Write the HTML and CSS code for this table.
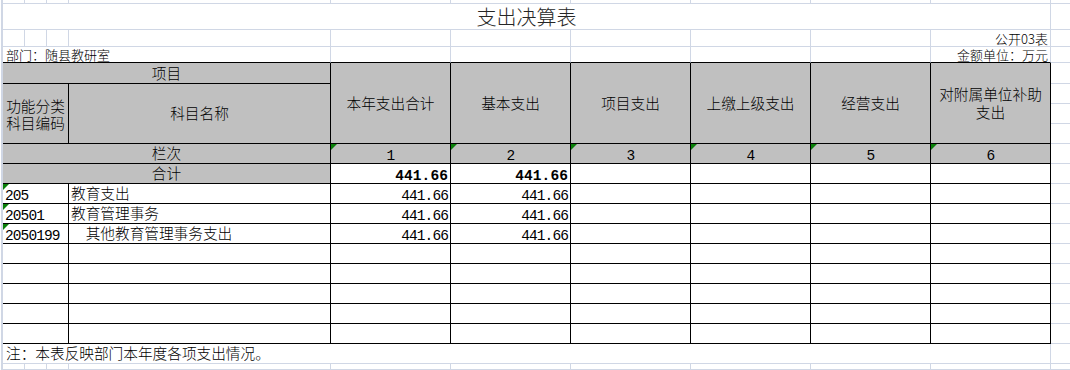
FILE: index.html
```html
<!DOCTYPE html>
<html lang="zh-CN">
<head>
<meta charset="utf-8">
<title>支出决算表</title>
<link rel="stylesheet" href="styles.css">
</head>
<body>
<div class="sheet">
  <div class="edge"></div>

  <!-- row 0 -->
  <div class="c"></div><div class="c"></div><div class="c"></div><div class="c"></div><div class="c"></div>
  <div class="c"></div><div class="c"></div><div class="c"></div><div class="c"></div><div class="c"></div>
  <div class="c x"></div>

  <!-- title -->
  <div class="c s10 title">支出决算表</div>
  <div class="c x"></div>

  <!-- row 2 -->
  <div class="c"></div><div class="c"></div><div class="c"></div><div class="c"></div><div class="c"></div>
  <div class="c"></div><div class="c"></div><div class="c"></div><div class="c"></div>
  <div class="c r small">公开03表</div>
  <div class="c x"></div>

  <!-- row 3 -->
  <div class="c s4 bb small left">部门：随县教研室</div>
  <div class="c bb"></div><div class="c bb"></div><div class="c bb"></div><div class="c bb"></div><div class="c bb"></div>
  <div class="c bb r small">金额单位：万元</div>
  <div class="c x"></div>

  <!-- header -->
  <div class="c t g s4 ctr">项目</div>
  <div class="c t g r4 ctr">本年支出合计</div>
  <div class="c t g r4 ctr">基本支出</div>
  <div class="c t g r4 ctr">项目支出</div>
  <div class="c t g r4 ctr">上缴上级支出</div>
  <div class="c t g r4 ctr">经营支出</div>
  <div class="c t g r4 ctr ml">对附属单位补助<br>支出</div>
  <div class="c x"></div>
  <div class="c t g s3 r3 ctr ml2">功能分类<br>科目编码</div>
  <div class="c t g r3 ctr">科目名称</div>
  <div class="c x"></div>
  <div class="c x"></div>
  <div class="c x"></div>

  <!-- 栏次 -->
  <div class="c t g s4 ctr">栏次</div>
  <div class="c t g n nc tri">1</div>
  <div class="c t g n nc tri">2</div>
  <div class="c t g n nc tri">3</div>
  <div class="c t g n nc tri">4</div>
  <div class="c t g n nc tri">5</div>
  <div class="c t g n nc tri">6</div>
  <div class="c x"></div>

  <!-- 合计 -->
  <div class="c t g s4 ctr">合计</div>
  <div class="c t n r b">441.66</div>
  <div class="c t n r b">441.66</div>
  <div class="c t"></div><div class="c t"></div><div class="c t"></div><div class="c t"></div>
  <div class="c x"></div>

  <!-- data rows -->
  <div class="c t s3 n code tri">205</div>
  <div class="c t">教育支出</div>
  <div class="c t n r">441.66</div>
  <div class="c t n r">441.66</div>
  <div class="c t"></div><div class="c t"></div><div class="c t"></div><div class="c t"></div>
  <div class="c x"></div>

  <div class="c t s3 n code tri">20501</div>
  <div class="c t">教育管理事务</div>
  <div class="c t n r">441.66</div>
  <div class="c t n r">441.66</div>
  <div class="c t"></div><div class="c t"></div><div class="c t"></div><div class="c t"></div>
  <div class="c x"></div>

  <div class="c t s3 n code tri">2050199</div>
  <div class="c t">　其他教育管理事务支出</div>
  <div class="c t n r">441.66</div>
  <div class="c t n r">441.66</div>
  <div class="c t"></div><div class="c t"></div><div class="c t"></div><div class="c t"></div>
  <div class="c x"></div>

  <div class="c t s3"></div><div class="c t"></div>
  <div class="c t"></div><div class="c t"></div><div class="c t"></div><div class="c t"></div><div class="c t"></div><div class="c t"></div>
  <div class="c x"></div>

  <div class="c t s3"></div><div class="c t"></div>
  <div class="c t"></div><div class="c t"></div><div class="c t"></div><div class="c t"></div><div class="c t"></div><div class="c t"></div>
  <div class="c x"></div>

  <div class="c t s3"></div><div class="c t"></div>
  <div class="c t"></div><div class="c t"></div><div class="c t"></div><div class="c t"></div><div class="c t"></div><div class="c t"></div>
  <div class="c x"></div>

  <div class="c t s3"></div><div class="c t"></div>
  <div class="c t"></div><div class="c t"></div><div class="c t"></div><div class="c t"></div><div class="c t"></div><div class="c t"></div>
  <div class="c x"></div>

  <div class="c t s3"></div><div class="c t"></div>
  <div class="c t"></div><div class="c t"></div><div class="c t"></div><div class="c t"></div><div class="c t"></div><div class="c t"></div>
  <div class="c x"></div>

  <!-- note -->
  <div class="c s10 note">注：本表反映部门本年度各项支出情况。</div>
  <div class="c x"></div>

  <!-- last row -->
  <div class="c"></div><div class="c"></div><div class="c"></div><div class="c"></div><div class="c"></div>
  <div class="c"></div><div class="c"></div><div class="c"></div><div class="c"></div><div class="c"></div>
  <div class="c x"></div>
</div>
</body>
</html>
```

FILE: styles.css
```css
html, body {
  margin: 0;
  padding: 0;
  overflow: hidden;
  background: #ffffff;
}

body {
  font-family: "Noto Sans CJK SC", sans-serif;
  font-size: 14.67px;
  font-weight: 300;
  color: #000000;
}

.sheet {
  display: grid;
  width: 1070px;
  grid-template-columns: 3px 22px 22px 22px 262px repeat(6, 120px) 1fr;
  grid-template-rows: 4px 26px 17px 16px 21px repeat(14, 20px) 6px;
}

.edge {
  grid-column: 1;
  grid-row: 1 / -1;
  border-right: 2px solid #d0d7e5;
}

.c {
  box-sizing: border-box;
  border-right: 1px solid #d0d7e5;
  border-bottom: 1px solid #d0d7e5;
  display: flex;
  align-items: flex-end;
  padding: 0 2px 2px 2px;
  line-height: 1;
  white-space: nowrap;
  min-width: 0;
}

.x {
  border-right: none;
}

.t {
  border-right-color: #000000;
  border-bottom-color: #000000;
}

.bb {
  border-bottom-color: #000000;
}

.g {
  background: #c0c0c0;
}

.s3 { grid-column: span 3; }
.s4 { grid-column: span 4; }
.s10 { grid-column: span 10; }
.r3 { grid-row: span 3; }
.r4 { grid-row: span 4; }

.ctr {
  justify-content: center;
  align-items: center;
  text-align: center;
  padding: 0;
}

.ml { line-height: 18px; }
.ml2 { line-height: 17px; }

.r { justify-content: flex-end; }

.left { padding-left: 3px; }

.small {
  font-size: 13px;
  padding-bottom: 1px;
}

.title {
  justify-content: center;
  font-size: 20px;
  color: #262626;
  padding-bottom: 2px;
}

.n {
  font-family: "Liberation Mono", monospace;
  font-size: 14.5px;
  font-weight: 400;
  letter-spacing: -0.9px;
  padding-bottom: 0;
}

.nc { justify-content: center; }

.b {
  font-weight: bold;
  letter-spacing: 0.1px;
}

.code { padding-left: 2px; }

.note { padding-left: 3px; }

.tri { position: relative; }

.tri::before {
  content: "";
  position: absolute;
  top: 0;
  left: 0;
  width: 0;
  height: 0;
  border-top: 6px solid #0a800a;
  border-right: 6px solid transparent;
}
```
